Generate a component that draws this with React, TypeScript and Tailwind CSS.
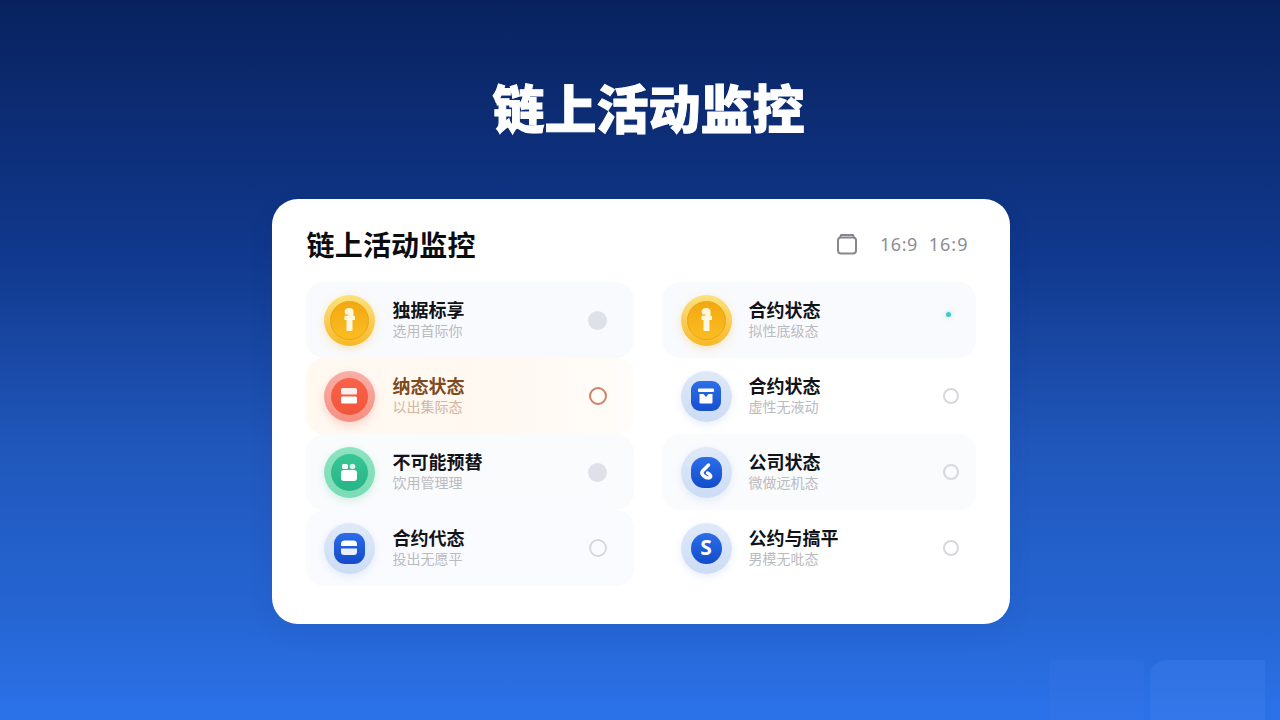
const cjk = { fontFamily: '"Noto Sans CJK SC", "Noto Sans", sans-serif' };

type Kind = 'gold' | 'red' | 'green' | 'blue';

const ringClass: Record<Kind, string> = {
  gold: 'bg-gradient-to-b from-[#fde27c] to-[#f7b820] shadow-[0_3px_8px_rgba(245,180,30,0.25)]',
  red: 'bg-gradient-to-b from-[#f8b0a6] to-[#f58f82] shadow-[0_4px_9px_rgba(240,110,90,0.25)]',
  green: 'bg-gradient-to-b from-[#8fe3c0] to-[#7adcb6] shadow-[0_3px_8px_rgba(70,200,150,0.22)]',
  blue: 'bg-gradient-to-b from-[#dfe9f8] to-[#ccdcf6] shadow-[0_3px_8px_rgba(90,140,230,0.14)]',
};

const KeyGlyph = () => (
  <svg width="18" height="26" viewBox="0 0 18 26" fill="#fff8e0">
    <path d="M4.500 4.500C5 2 7 1 9.500 1c2.500 0 4 1.500 4 3.500V9H15v4h-2.500v10a1 1 0 0 1-1 1h-4a1 1 0 0 1-1-1V13H4.500V9l4-.500V7.500H5.500z" />
  </svg>
);

const Stacked = () => (
  <svg width="20" height="18" viewBox="0 0 20 18" fill="#fff">
    <rect x="2" y="1" width="16" height="6.500" rx="1.500" fillOpacity="0.9" />
    <rect x="2" y="9.500" width="16" height="7" rx="1.500" />
  </svg>
);

function Glyph({ id }: { id: string }) {
  if (id === 'coinA' || id === 'coinB') {
    return (
      <span className="w-[39px] h-[39px] rounded-full flex items-center justify-center bg-gradient-to-b from-[#f3a811] to-[#fabd22] border border-[#eba60f]">
        <KeyGlyph />
      </span>
    );
  }
  if (id === 'red') {
    return (
      <span className="w-[37px] h-[37px] rounded-full flex items-center justify-center bg-gradient-to-b from-[#f9624a] to-[#f2553a]">
        <Stacked />
      </span>
    );
  }
  if (id === 'green') {
    return (
      <span className="w-[37px] h-[37px] rounded-full flex items-center justify-center bg-gradient-to-b from-[#37c795] to-[#27b488]">
        <svg width="20" height="20" viewBox="0 0 20 20" fill="#fff">
          <rect x="2" y="8" width="16" height="11" rx="3" />
          <rect x="3" y="2" width="6" height="5" rx="1.500" />
          <circle cx="13.500" cy="4.500" r="2.800" fillOpacity="0.85" />
        </svg>
      </span>
    );
  }
  if (id === 'box') {
    return (
      <span className="w-[30px] h-[30px] rounded-[9px] flex items-center justify-center bg-gradient-to-b from-[#2d6fe8] to-[#1650cf]">
        <svg width="18" height="18" viewBox="0 0 18 18" fill="#fff">
          <rect x="1" y="1.500" width="16" height="3.500" rx="1" />
          <path d="M2.500 7H6.500L9 10l2.500-3h4v8.500a1 1 0 0 1-1 1h-11a1 1 0 0 1-1-1z" />
        </svg>
      </span>
    );
  }
  if (id === 'db') {
    return (
      <span className="w-[31px] h-[31px] rounded-[11px] flex items-center justify-center bg-gradient-to-b from-[#2b6cea] to-[#1549c9]">
        <svg width="22" height="22" viewBox="0 0 22 22" fill="#fff">
          <path d="M3 6.500a3.500 3.500 0 0 1 3.500-3h9a3.500 3.500 0 0 1 3.500 3V9H3z" />
          <path d="M3 11.500h16V15a3 3 0 0 1-3 3H6a3 3 0 0 1-3-3z" fillOpacity="0.9" />
        </svg>
      </span>
    );
  }
  if (id === 'six') {
    return (
      <span className="w-[31px] h-[31px] rounded-[13px] flex items-center justify-center bg-gradient-to-b from-[#2b6eea] to-[#124bc9]">
        <svg width="16" height="20" viewBox="0 0 16 20" fill="none" stroke="#fff" strokeWidth="3.500" strokeLinecap="round" strokeLinejoin="round">
          <path d="M10.500 3 4.500 9c-1.500 2 0 4 2 5.500 2 1.500 5 2 6 .5 .8-1.500-1-3-3-4" />
        </svg>
      </span>
    );
  }
  return (
    <span className="w-[31px] h-[31px] rounded-full flex items-center justify-center bg-gradient-to-b from-[#2b6eea] to-[#124bc9] text-white text-[21px] font-bold" style={{ fontFamily: '"Noto Sans", sans-serif' }}>
      S
    </span>
  );
}

function Mark({ kind }: { kind: string }) {
  if (kind === 'solid') return <span className="w-[19px] h-[19px] rounded-full bg-[#dfe1e8]" />;
  if (kind === 'accent') return <span className="w-[18px] h-[18px] rounded-full border-2 border-[#cf8066]" />;
  if (kind === 'ringL') return <span className="w-[18px] h-[18px] rounded-full border-2 border-[#d7d8dc]" />;
  if (kind === 'ring') return <span className="w-[16px] h-[16px] rounded-full border-2 border-[#d7d8dc]" />;
  return <span className="w-[5px] h-[5px] rounded-full bg-[#45c8c4] mb-[11px] mr-[5px] shadow-[0_0_4px_rgba(69,200,196,0.5)]" />;
}

const leftRows = [
  { title: '独据标享', sub: '选用首际你', kind: 'gold' as Kind, glyph: 'coinA', mark: 'solid', bg: 'bg-[#f9fafd]' },
  { title: '纳态状态', sub: '以出集际态', kind: 'red' as Kind, glyph: 'red', mark: 'accent', bg: 'bg-gradient-to-r from-[#fff9f2] via-[#fff8f0] to-[#fffcf9]', warm: true },
  { title: '不可能预替', sub: '饮用管理理', kind: 'green' as Kind, glyph: 'green', mark: 'solid', bg: 'bg-[#fafbfd]' },
  { title: '合约代态', sub: '投出无愿平', kind: 'blue' as Kind, glyph: 'db', mark: 'ringL', bg: 'bg-[#fafbfe]' },
];

const rightRows = [
  { title: '合约状态', sub: '拟性底级态', kind: 'gold' as Kind, glyph: 'coinB', mark: 'dot', bg: 'bg-[#f9fafd]' },
  { title: '合约状态', sub: '虚性无液动', kind: 'blue' as Kind, glyph: 'box', mark: 'ring', bg: '' },
  { title: '公司状态', sub: '微做远机态', kind: 'blue' as Kind, glyph: 'six', mark: 'ring', bg: 'bg-[#fafbfd]' },
  { title: '公约与搞平', sub: '男模无吡态', kind: 'blue' as Kind, glyph: 's', mark: 'ring', bg: '' },
];

type RowData = (typeof leftRows)[number];

function Row({ row, side }: { row: RowData; side: 'left' | 'right' }) {
  return (
    <div className={`h-[76px] rounded-[18px] flex items-center ${row.bg} ${side === 'left' ? 'pl-[18px]' : 'pl-[19px]'}`}>
      <span className={`w-[51px] h-[51px] rounded-full shrink-0 flex items-center justify-center ${ringClass[row.kind]}`}>
        <Glyph id={row.glyph} />
      </span>
      <div className={`flex-1 pb-[4px] ${side === 'left' ? 'ml-[18px]' : 'ml-[17px]'}`}>
        <p className={`text-[18px] leading-[24px] font-bold ${row.warm ? 'text-[#7d4b1c]' : 'text-[#111318]'}`}>{row.title}</p>
        <p className={`text-[14px] leading-[20px] mt-[-1px] ${row.warm ? 'text-[#d2b5a2]' : 'text-[#b9bbc1]'}`}>{row.sub}</p>
      </div>
      <div className={`flex items-center justify-center w-[20px] ${side === 'left' ? 'mr-[26px]' : 'mr-[15px]'}`}>
        <Mark kind={row.mark} />
      </div>
    </div>
  );
}

export default function App() {
  return (
    <div className="w-[1280px] h-[720px] overflow-hidden relative flex flex-col items-center bg-[linear-gradient(180deg,#09225f_0%,#10388c_35%,#2057bb_62%,#2565d2_85%,#2b72ea_100%)]" style={cjk}>
      <h1 className="mt-[69px] h-[76px] leading-[76px] text-[52px] font-black text-white [-webkit-text-stroke:1px_white] ml-[17px]">
        链上活动监控
      </h1>

      <div className="mt-[54px] w-[738px] h-[425px] ml-[1px] rounded-[26px] bg-white px-[34px] pt-[24px] shadow-[0_8px_24px_rgba(10,40,110,0.08)]">
        <div className="h-[42px] flex items-center justify-between">
          <h2 className="text-[28px] font-bold text-[#0b0c10] ml-[1px] tracking-[0.2px]">链上活动监控</h2>
          <div className="flex items-center text-[18px] text-[#8c8e93] mr-[7px]" style={{ fontFamily: '"Noto Sans", sans-serif' }}>
            <svg width="22" height="22" viewBox="0 0 22 22" fill="none" stroke="#86888d" strokeWidth="2" strokeLinejoin="round">
              <path d="M4 4.500 5 2h12l1 2.500" />
              <rect x="2" y="4.500" width="18" height="16" rx="3" />
            </svg>
            <span className="ml-[22px] tracking-[0.5px]">16:9</span>
            <span className="ml-[11px] tracking-[1px]">16:9</span>
          </div>
        </div>

        <div className="mt-[17px] grid grid-cols-[328px_314px] gap-x-[28px]">
          <div className="flex flex-col">
            {leftRows.map(r => <Row key={r.title} row={r} side="left" />)}
          </div>
          <div className="flex flex-col">
            {rightRows.map((r, i) => <Row key={i} row={r} side="right" />)}
          </div>
        </div>
      </div>

      {/* faint watermark in the corner */}
      <div className="absolute right-[15px] bottom-0 flex gap-[6px]">
        <div className="w-[95px] h-[60px] bg-[#3a78e6]/25 rounded-t-sm" />
        <div className="w-[115px] h-[60px] bg-[#4a86ee]/25 rounded-tl-2xl" />
      </div>
    </div>
  );
}
